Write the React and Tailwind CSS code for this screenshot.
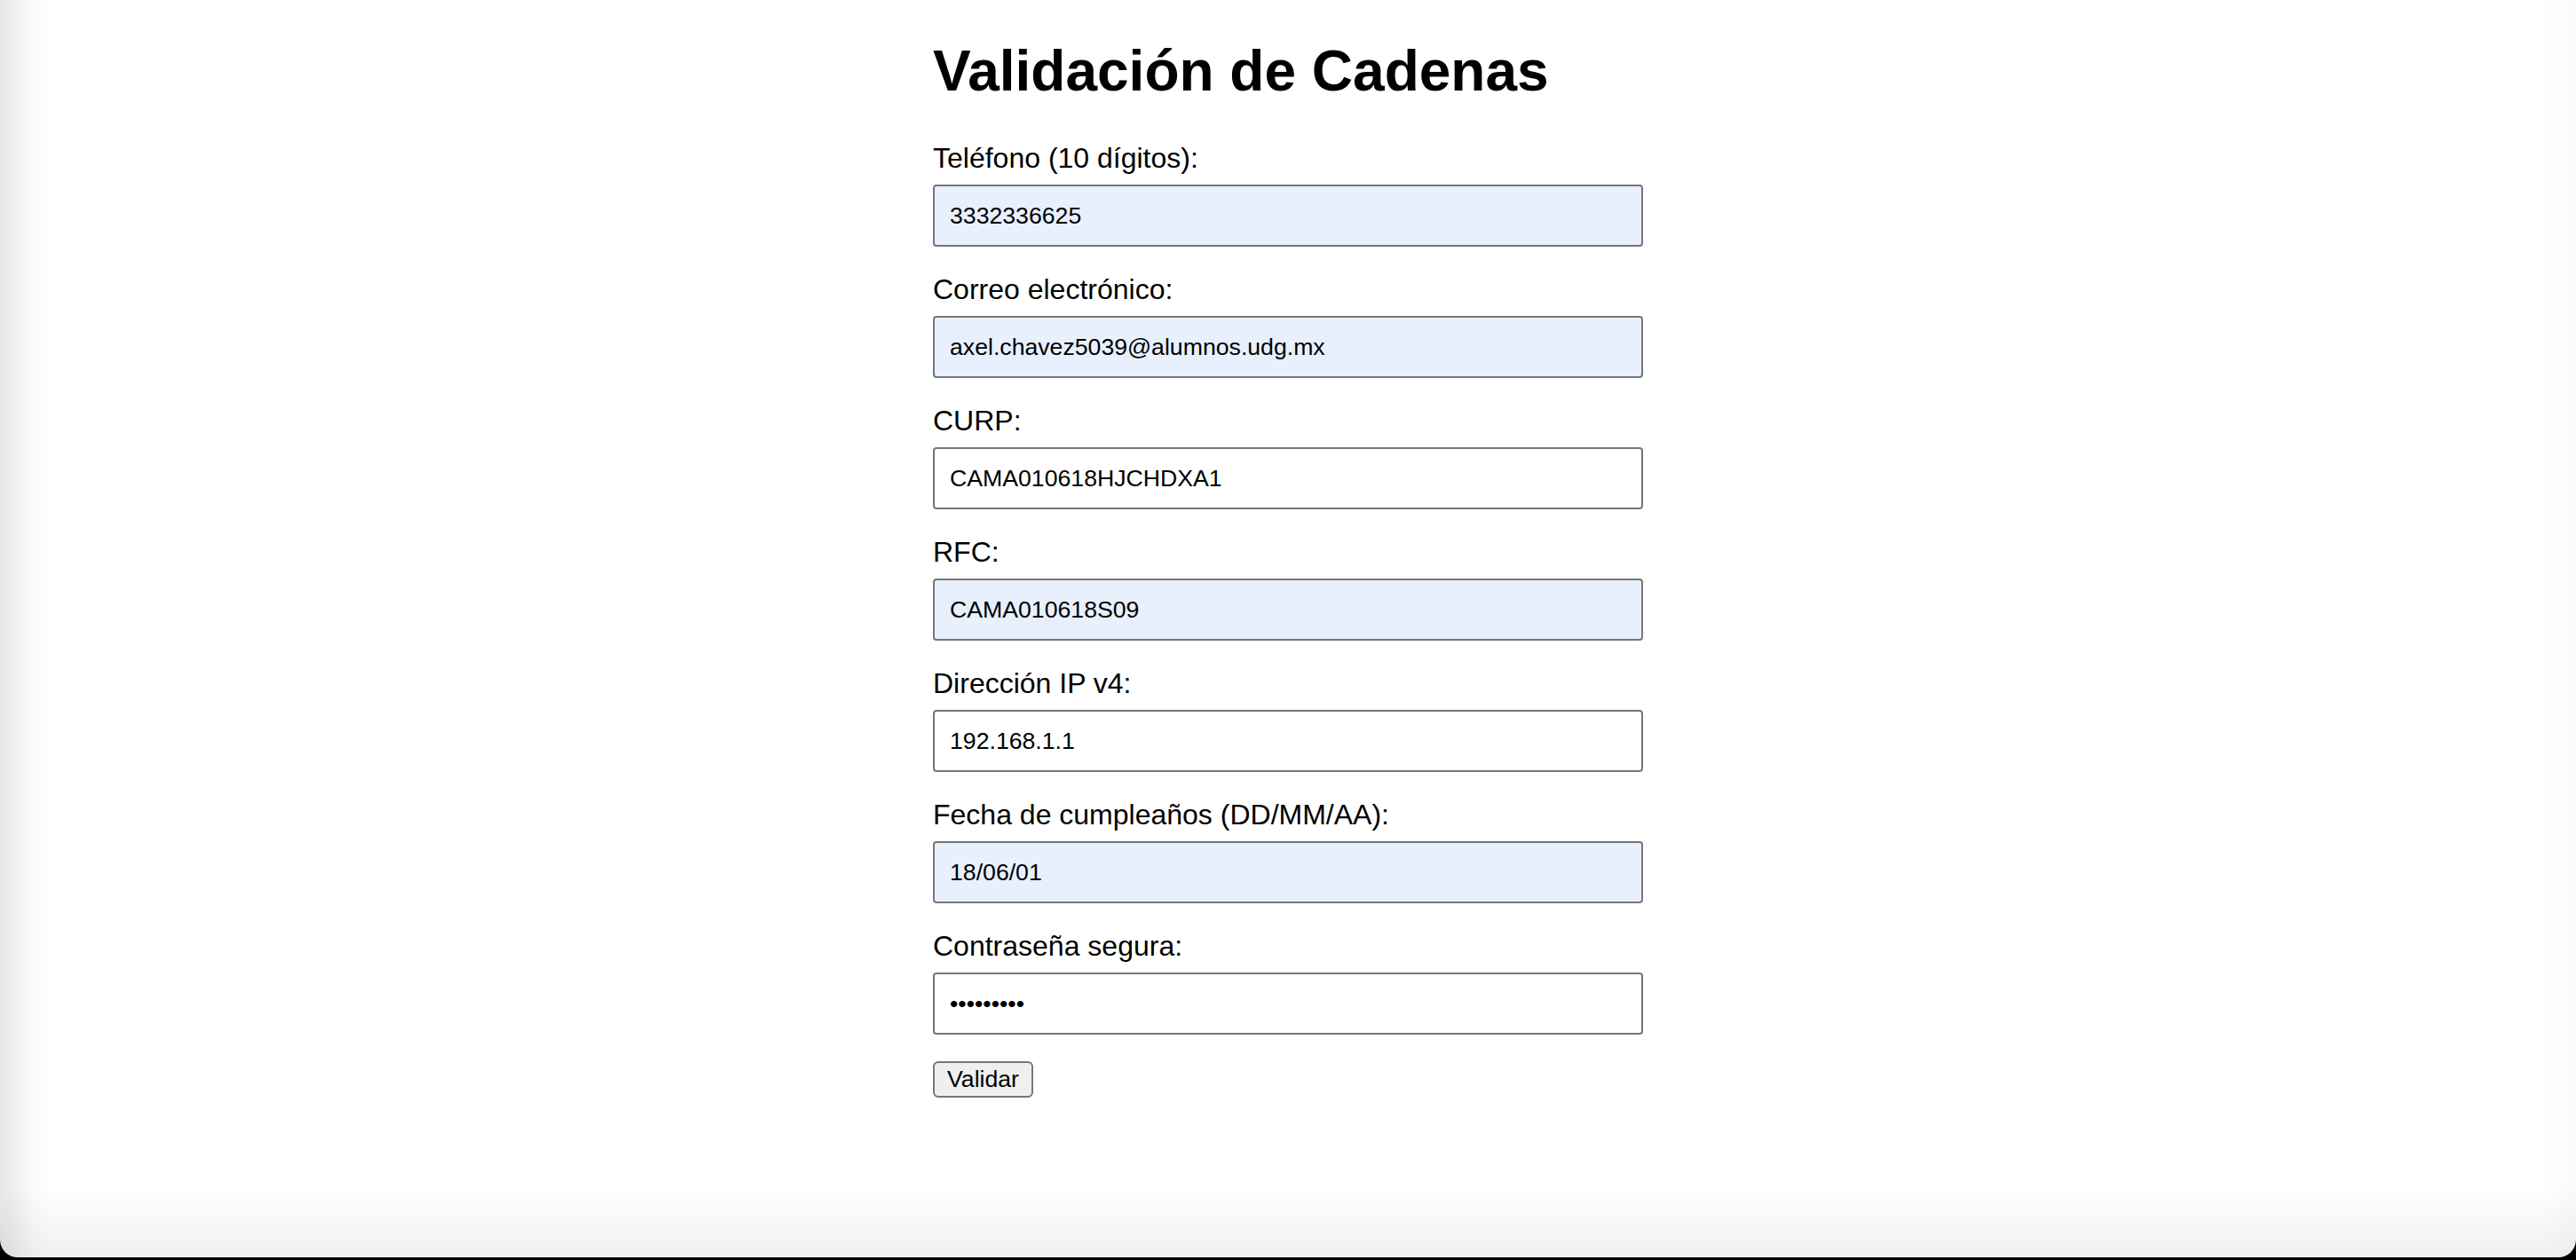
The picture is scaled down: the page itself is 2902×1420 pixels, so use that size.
const fields = [
  { label: 'Teléfono (10 dígitos):', type: 'text', value: '3332336625', filled: true },
  { label: 'Correo electrónico:', type: 'text', value: 'axel.chavez5039@alumnos.udg.mx', filled: true },
  { label: 'CURP:', type: 'text', value: 'CAMA010618HJCHDXA1', filled: false },
  { label: 'RFC:', type: 'text', value: 'CAMA010618S09', filled: true },
  { label: 'Dirección IP v4:', type: 'text', value: '192.168.1.1', filled: false },
  { label: 'Fecha de cumpleaños (DD/MM/AA):', type: 'text', value: '18/06/01', filled: true },
  { label: 'Contraseña segura:', type: 'password', value: 'Axel2001!', filled: false },
]

function Field({ label, type, value, filled }) {
  return (
    <div className="mb-[30px]">
      <label className="mb-[11px] block text-[32px] leading-[37px] text-black">{label}</label>
      <input
        type={type}
        defaultValue={value}
        readOnly
        className={
          'block h-[70px] w-full rounded-[4px] border-2 border-[#767676] px-[17px] text-[26.67px] text-black outline-none ' +
          (filled ? 'bg-[#e8f0fe]' : 'bg-white')
        }
      />
    </div>
  )
}

export default function App() {
  return (
    <div className="h-[1420px] w-full overflow-hidden bg-black font-['Liberation_Sans',Arial,sans-serif]">
      <div className="h-[1417px] rounded-b-[20px] bg-white bg-[linear-gradient(to_right,rgba(0,0,0,0.09),rgba(0,0,0,0.075)_12px,rgba(0,0,0,0.02)_36px,rgba(0,0,0,0)_60px),linear-gradient(to_left,rgba(0,0,0,0.02),rgba(0,0,0,0)_40px),linear-gradient(to_top,rgba(0,0,0,0.06),rgba(0,0,0,0)_80px)]">
        <div className="mx-auto w-[800px] pt-[43px]">
          <h1 className="mb-[43px] text-[64px] font-bold leading-[74px] text-black">Validación de Cadenas</h1>
          <form onSubmit={(e) => e.preventDefault()}>
            {fields.map((f) => (
              <Field key={f.label} {...f} />
            ))}
            <button
              type="submit"
              className="h-[41px] rounded-[6px] border-2 border-[#767676] bg-[#efefef] px-[14px] text-[26.67px] leading-none text-black"
            >
              Validar
            </button>
          </form>
        </div>
      </div>
    </div>
  )
}
